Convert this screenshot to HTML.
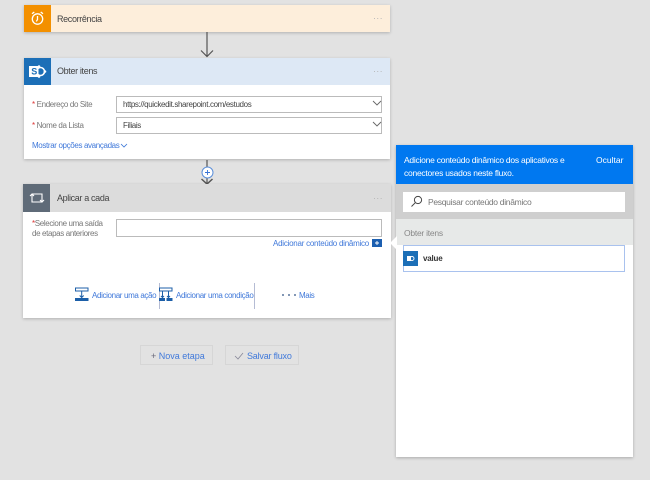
<!DOCTYPE html>
<html lang="pt">
<head>
<meta charset="utf-8">
<style>
html,body{margin:0;padding:0;width:650px;height:480px;overflow:hidden;background:#e2e2e2;}
body{font-family:"Liberation Sans",sans-serif;font-size:8px;letter-spacing:-.36px;color:#444;position:relative;filter:blur(.3px);}
.a{position:absolute;white-space:nowrap;}
.card{position:absolute;background:#fff;box-shadow:0 1px 3px rgba(0,0,0,.22);}
.input{position:absolute;background:#fff;border:1px solid #bbb;box-sizing:border-box;}
.link{color:#4079da;}
.lab{color:#777;}
.req{color:#d33;}
.title{font-size:9px;letter-spacing:-.35px;color:#444;}
.dots{color:#b5b5b5;font-size:9px;letter-spacing:.3px;}
.p{font-size:8.5px;letter-spacing:-.25px;}
svg{position:absolute;display:block;}
</style>
</head>
<body>
<!-- Recorrencia -->
<div class="card" style="left:24px;top:5px;width:366px;height:27px;background:#fdeedb;"></div>
<div class="a" style="left:24px;top:5px;width:27px;height:27px;background:#f39000;"></div>
<svg style="left:24px;top:5px" width="27" height="27" viewBox="0 0 27 27" fill="none" stroke="#fff" stroke-width="1.300"><circle cx="13.500" cy="14" r="5.200"/><path d="M13.500 11V14.400L12.300 16.400M8 8.800L10.300 7M19 8.800L16.700 7"/></svg>
<div class="a title" style="left:57px;top:14px;">Recorrência</div>
<div class="a dots" style="left:373px;top:13px;">···</div>

<!-- arrow 1 -->
<svg style="left:198px;top:32px" width="20" height="26" viewBox="0 0 20 26" fill="none" stroke="#555" stroke-width="1.200"><path d="M9 0V24.500M3 18.500L9 24.500L15 18.500"/></svg>

<!-- Obter itens -->
<div class="card" style="left:24px;top:58px;width:366px;height:101px;"></div>
<div class="a" style="left:24px;top:58px;width:366px;height:27px;background:#dde8f5;"></div>
<div class="a" style="left:24px;top:58px;width:27px;height:27px;background:#1c6fb7;"></div>
<svg style="left:24px;top:58px" width="27" height="27" viewBox="0 0 27 27"><circle cx="16.500" cy="13.500" r="4" fill="none" stroke="#fff" stroke-width="1.600"/><circle cx="15" cy="8.500" r="1.300" fill="#fff"/><circle cx="15" cy="18.500" r="1.300" fill="#fff"/><circle cx="21" cy="13.500" r="1.300" fill="#fff"/><rect x="5" y="8" width="9.500" height="11" fill="#fff"/><text x="7.300" y="16.600" font-family="Liberation Sans" font-size="9" font-weight="bold" fill="#1c6fb7">S</text></svg>
<div class="a title" style="left:57px;top:66px;">Obter itens</div>
<div class="a dots" style="left:373px;top:66px;">···</div>

<div class="a lab" style="left:32px;top:100px;"><span class="req">*</span> Endereço do Site</div>
<div class="input" style="left:116px;top:96px;width:266px;height:17px;"></div>
<div class="a" style="left:123px;top:100px;color:#444;">https://quickedit.sharepoint.com/estudos</div>
<svg style="left:372px;top:100px" width="10" height="7" viewBox="0 0 10 7" fill="none" stroke="#666" stroke-width=".9"><path d="M1 1L5 5L9 1"/></svg>

<div class="a lab" style="left:32px;top:121px;"><span class="req">*</span> Nome da Lista</div>
<div class="input" style="left:116px;top:117px;width:266px;height:17px;"></div>
<div class="a" style="left:123px;top:121px;color:#444;">Filiais</div>
<svg style="left:372px;top:121px" width="10" height="7" viewBox="0 0 10 7" fill="none" stroke="#666" stroke-width=".9"><path d="M1 1L5 5L9 1"/></svg>

<div class="a link" style="left:32px;top:141px;">Mostrar opções avançadas</div>
<svg style="left:120px;top:143px" width="8" height="6" viewBox="0 0 8 6" fill="none" stroke="#3a75d6" stroke-width=".8"><path d="M1 1L4 4L7 1"/></svg>

<!-- connector -->
<svg style="left:198px;top:159px" width="20" height="26" viewBox="0 0 20 26" fill="none"><path d="M9 1V8" stroke="#555" stroke-width="1.200"/><path d="M3.500 20L9 25L14.500 20" stroke="#555" stroke-width="1.500"/><path d="M9 18V25" stroke="#555" stroke-width="1.200"/><circle cx="9.500" cy="13.500" r="5.500" fill="#fff" stroke="#5b8fd9" stroke-width="1"/><path d="M7 13.500H12M9.500 11V16" stroke="#3a75d6" stroke-width=".9"/></svg>

<!-- Aplicar a cada -->
<div class="card" style="left:23px;top:184px;width:368px;height:134px;"></div>
<div class="a" style="left:23px;top:184px;width:368px;height:28px;background:#dcdcdc;"></div>
<div class="a" style="left:23px;top:184px;width:27px;height:28px;background:#5f6b78;"></div>
<svg style="left:23px;top:184px" width="27" height="28" viewBox="0 0 27 28" fill="none" stroke="#fff" stroke-width="1.100"><path d="M9 10H19V18H9V10"/><path d="M7 12L9 10L11 12M17 16L19 18L21 16"/></svg>
<div class="a title" style="left:57px;top:193px;">Aplicar a cada</div>
<div class="a dots" style="left:373px;top:193px;">···</div>

<div class="a lab" style="left:32px;top:219px;line-height:10px;"><span class="req">*</span>Selecione uma saída<br>de etapas anteriores</div>
<div class="input" style="left:116px;top:219px;width:266px;height:18px;"></div>
<div class="a link" style="left:273px;top:239px;letter-spacing:-.25px;">Adicionar conteúdo dinâmico</div>
<div class="a" style="left:372px;top:239px;width:10px;height:8px;background:#1c5fb0;"></div>
<svg style="left:372px;top:239px" width="10" height="8" viewBox="0 0 10 8" fill="none" stroke="#fff" stroke-width=".9"><path d="M3 4H7M5 2V6"/></svg>

<!-- action row -->
<svg style="left:75px;top:287px" width="14" height="15" viewBox="0 0 14 15" fill="none" stroke="#1c5fa8" stroke-width="1"><rect x=".5" y="1" width="12.500" height="3"/><path d="M6.700 4V10.500M4.700 8.500L6.700 10.500L8.700 8.500"/><rect x="0" y="11" width="13.500" height="3" fill="#1c5fa8" stroke="none"/></svg>
<div class="a link" style="left:92px;top:291px;">Adicionar uma ação</div>
<div class="a" style="left:159px;top:283px;width:1px;height:26px;background:#b5bcd4;"></div>
<svg style="left:159px;top:287px" width="14" height="15" viewBox="0 0 14 15" fill="none" stroke="#1c5fa8" stroke-width="1"><rect x=".5" y="1" width="12.500" height="3"/><path d="M3.500 4V10.500M9.500 4V10.500M2 9L3.500 10.500L5 9M8 9L9.500 10.500L11 9"/><rect x="0" y="11" width="6" height="3" fill="#1c5fa8" stroke="none"/><rect x="7.500" y="11" width="6" height="3" fill="#1c5fa8" stroke="none"/></svg>
<div class="a link" style="left:176px;top:291px;">Adicionar uma condição</div>
<div class="a" style="left:254px;top:283px;width:1px;height:26px;background:#b5bcd4;"></div>
<svg style="left:281px;top:293px" width="16" height="4" viewBox="0 0 16 4" fill="#2a4d80"><circle cx="2" cy="2" r=".9"/><circle cx="8" cy="2" r=".9"/><circle cx="14" cy="2" r=".9"/></svg>
<div class="a link" style="left:299px;top:291px;">Mais</div>

<!-- buttons -->
<div class="a" style="left:140px;top:345px;width:73px;height:20px;background:#e2e2e2;border:1px solid #d6d6d6;box-sizing:border-box;"></div>
<div class="a link" style="left:151px;top:351px;font-size:9px;letter-spacing:0;"><span style="color:#667;">+</span> Nova etapa</div>
<div class="a" style="left:225px;top:345px;width:74px;height:20px;background:#e2e2e2;border:1px solid #d6d6d6;box-sizing:border-box;"></div>
<svg style="left:234px;top:352px" width="10" height="8" viewBox="0 0 10 8" fill="none" stroke="#889" stroke-width=".8"><path d="M1 4L4 7L9 1"/></svg>
<div class="a link" style="left:247px;top:351px;font-size:9px;letter-spacing:-.2px;">Salvar fluxo</div>

<!-- panel -->
<div class="card" style="left:396px;top:145px;width:237px;height:312px;box-shadow:0 1px 3px rgba(0,0,0,.25);"></div>
<div class="a" style="left:396px;top:145px;width:237px;height:39px;background:#0078f0;"></div>
<div class="a p" style="left:404px;top:154px;color:#fff;line-height:12.500px;">Adicione conteúdo dinâmico dos aplicativos e<br>conectores usados neste fluxo.</div>
<div class="a p" style="left:596px;top:155px;color:#fff;letter-spacing:0;">Ocultar</div>
<div class="a" style="left:396px;top:184px;width:237px;height:35px;background:#cfcfcf;"></div>
<div class="a" style="left:403px;top:192px;width:222px;height:20px;background:#fff;"></div>
<svg style="left:410px;top:195px" width="13" height="13" viewBox="0 0 13 13" fill="none" stroke="#444" stroke-width="1"><circle cx="8" cy="5" r="3.600"/><path d="M5.300 7.700L1.500 11.500"/></svg>
<div class="a lab p" style="left:428px;top:197px;letter-spacing:-.3px;">Pesquisar conteúdo dinâmico</div>
<div class="a" style="left:396px;top:219px;width:237px;height:26px;background:#e7e9e8;"></div>
<div class="a p" style="left:404px;top:228px;color:#888;">Obter itens</div>
<svg style="left:390px;top:236px" width="7" height="14" viewBox="0 0 7 14"><path d="M7 0L0 7L7 14Z" fill="#fff"/></svg>
<div class="a" style="left:403px;top:245px;width:222px;height:27px;background:#fff;border:1px solid #a9c2ee;box-sizing:border-box;"></div>
<div class="a" style="left:403px;top:251px;width:15px;height:15px;background:#1c6fb7;"></div>
<svg style="left:403px;top:251px" width="15" height="15" viewBox="0 0 15 15"><rect x="4" y="5" width="4" height="5" fill="#fff"/><circle cx="9" cy="7.500" r="2" fill="none" stroke="#fff" stroke-width=".9"/></svg>
<div class="a" style="left:423px;top:254px;color:#333;font-weight:bold;font-size:8px;letter-spacing:-.2px;">value</div>
</body>
</html>
